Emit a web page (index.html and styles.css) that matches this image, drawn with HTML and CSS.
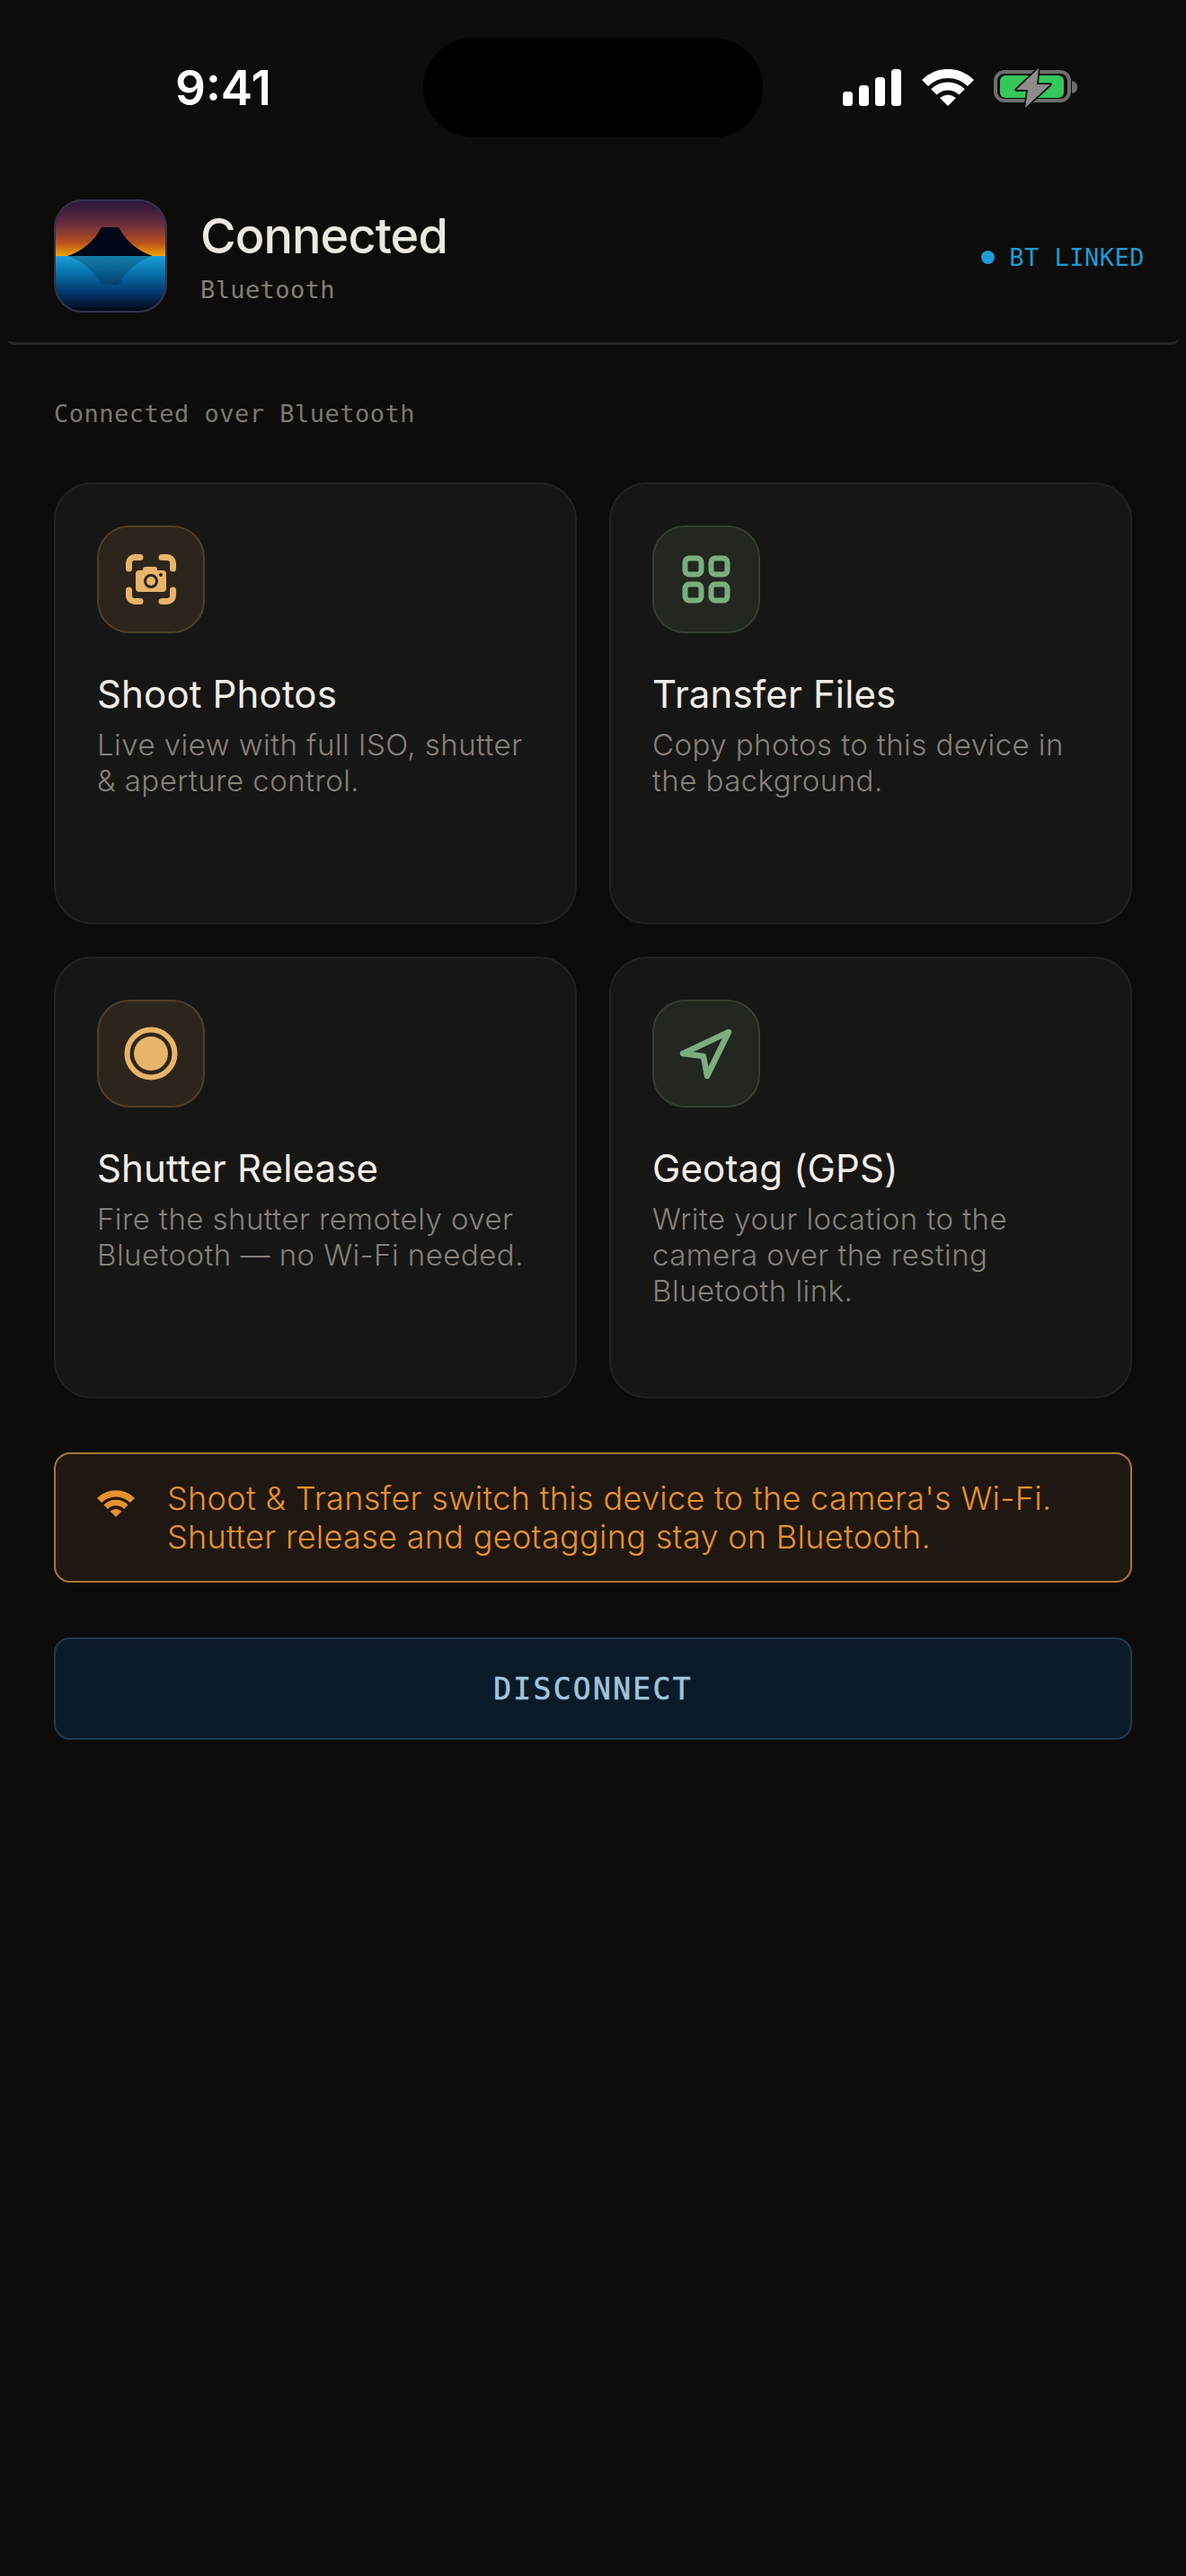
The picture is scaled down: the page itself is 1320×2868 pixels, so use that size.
FILE: index.html
```html
<!DOCTYPE html>
<html lang="en">
	<head>
		<meta charset="utf-8">
		<meta name="viewport" content="width=device-width, initial-scale=1.0">
		<title>Connected</title>
		<link rel="stylesheet" href="styles.css">
	</head>
	<body>
		<div class="status-bar">
			<div class="time">9:41</div>
			<div class="island"></div>
			<div class="status-icons">
				<svg class="signal" width="66" height="42" viewBox="0 0 66 42" fill="currentColor">
					<rect x="1" y="25" width="11" height="16" rx="3.5"/>
					<rect x="19" y="18" width="11" height="23" rx="3.5"/>
					<rect x="37" y="9" width="11" height="32" rx="3.5"/>
					<rect x="55" y="0" width="11" height="41" rx="3.5"/>
				</svg>
				<svg class="wifi" width="58" height="42" viewBox="0 0 58 42">
					<path d="M3.5 15.5A36 36 0 0 1 54.5 15.5" fill="none" stroke="currentColor" stroke-width="10"/>
					<path d="M13.4 25.4A22 22 0 0 1 44.6 25.4" fill="none" stroke="currentColor" stroke-width="9"/>
					<path d="M29 41L20 32Q29 25 38 32Z" fill="currentColor"/>
				</svg>
				<svg class="battery" width="96" height="50" viewBox="0 0 96 50">
					<rect x="3" y="7" width="82" height="32" rx="10" fill="none" stroke="#6e6e6c" stroke-width="4"/>
					<rect x="8" y="11" width="71" height="25" rx="6" fill="#34c759"/>
					<path d="M88 17c4 1 6 3 6 7s-2 6-6 7z" fill="#6e6e6c"/>
					<path d="M51 3L26 27H39L36 47L64 21H49Z" fill="#8c8c8a" stroke="#0d0c0a" stroke-width="3.5" stroke-linejoin="round" paint-order="stroke"/>
				</svg>
			</div>
		</div>

		<header class="top-bar">
			<svg class="app-icon" width="126" height="126" viewBox="0 0 126 126">
				<defs>
					<linearGradient id="sea" x1="0" y1="0" x2="0" y2="1">
						<stop offset="0" stop-color="#25163a"/>
						<stop offset="0.22" stop-color="#6c2e3c"/>
						<stop offset="0.38" stop-color="#b84f20"/>
						<stop offset="0.5" stop-color="#f2a600"/>
						<stop offset="0.5" stop-color="#1d9fd6"/>
						<stop offset="0.66" stop-color="#0670aa"/>
						<stop offset="0.85" stop-color="#053065"/>
						<stop offset="1" stop-color="#02040f"/>
					</linearGradient>
				</defs>
				<rect x="1" y="1" width="124" height="124" rx="31" fill="url(#sea)" stroke="#35324a" stroke-width="2"/>
				<path d="M15 63Q40 55 53 31H72Q85 55 110 63Z" fill="#010818"/>
				<path d="M15 63Q40 71 53 95H72Q85 71 110 63Z" fill="#010818" opacity="0.22"/>
			</svg>
			<div class="top-text">
				<div class="top-title">Connected</div>
				<div class="top-sub">Bluetooth</div>
			</div>
			<div class="link-state"><span class="link-dot"></span>BT LINKED</div>
		</header>

		<main class="content">
			<div class="section-label">Connected over Bluetooth</div>

			<div class="cards">
				<div class="card">
					<div class="card-icon amber">
						<svg width="60" height="60" viewBox="0 0 60 60">
							<path d="M5.5 18V12A6.5 6.5 0 0 1 12 5.5H18M42 5.5H48A6.5 6.5 0 0 1 54.5 12V18M54.5 42V48A6.5 6.5 0 0 1 48 54.5H42M18 54.5H12A6.5 6.5 0 0 1 5.5 48V42" fill="none" stroke="currentColor" stroke-width="7" stroke-linecap="round"/>
							<rect x="13" y="20" width="34" height="24" rx="4" fill="currentColor"/>
							<rect x="21" y="16" width="16" height="10" rx="3" fill="currentColor"/>
							<circle cx="30" cy="32" r="6.5" fill="none" stroke="#2d251c" stroke-width="3"/>
							<circle cx="41" cy="25" r="2" fill="#2d251c"/>
						</svg>
					</div>
					<h2 class="card-title">Shoot Photos</h2>
					<p class="card-desc">Live view with full ISO, shutter &amp; aperture control.</p>
				</div>
				<div class="card">
					<div class="card-icon green">
						<svg width="60" height="60" viewBox="0 0 60 60">
							<rect x="6.5" y="6.5" width="18" height="18" rx="4.5" fill="none" stroke="currentColor" stroke-width="6"/>
							<rect x="35.5" y="6.5" width="18" height="18" rx="4.5" fill="none" stroke="currentColor" stroke-width="6"/>
							<rect x="6.5" y="35.5" width="18" height="18" rx="4.5" fill="none" stroke="currentColor" stroke-width="6"/>
							<rect x="35.5" y="35.5" width="18" height="18" rx="4.5" fill="none" stroke="currentColor" stroke-width="6"/>
						</svg>
					</div>
					<h2 class="card-title">Transfer Files</h2>
					<p class="card-desc">Copy photos to this device in the background.</p>
				</div>
				<div class="card">
					<div class="card-icon amber">
						<svg width="60" height="60" viewBox="0 0 60 60">
							<circle cx="30" cy="30" r="26.5" fill="none" stroke="currentColor" stroke-width="6"/>
							<circle cx="30" cy="30" r="19" fill="currentColor"/>
						</svg>
					</div>
					<h2 class="card-title">Shutter Release</h2>
					<p class="card-desc">Fire the shutter remotely over Bluetooth — no Wi-Fi needed.</p>
				</div>
				<div class="card">
					<div class="card-icon green">
						<svg width="60" height="60" viewBox="0 0 60 60">
							<path d="M55 6L4 30L27 33L31 55Z" fill="none" stroke="currentColor" stroke-width="6.5" stroke-linejoin="round"/>
						</svg>
					</div>
					<h2 class="card-title">Geotag (GPS)</h2>
					<p class="card-desc">Write your location to the camera over the resting Bluetooth link.</p>
				</div>
			</div>

			<div class="notice">
				<svg class="notice-icon" width="42" height="31" viewBox="0 0 58 42">
					<path d="M3.5 15.5A36 36 0 0 1 54.5 15.5" fill="none" stroke="currentColor" stroke-width="10"/>
					<path d="M13.4 25.4A22 22 0 0 1 44.6 25.4" fill="none" stroke="currentColor" stroke-width="9"/>
					<path d="M29 41L20 32Q29 25 38 32Z" fill="currentColor"/>
				</svg>
				<p class="notice-text">Shoot &amp; Transfer switch this device to the camera's Wi-Fi. Shutter release and geotagging stay on Bluetooth.</p>
			</div>

			<button type="button" class="disconnect">DISCONNECT</button>
		</main>
	</body>
</html>
```

FILE: styles.css
```css
body {
	margin: 0;
	height: 2868px;
	overflow: hidden;
	background: #0d0c0a;
	color: #f0ebe3;
	font-family: Inter, "Liberation Sans", sans-serif;
}

/* status bar */
.status-bar {
	display: grid;
	grid-template-columns: 1fr 378px 1fr;
	align-items: center;
	padding-top: 42px;
}

.time {
	padding-left: 195px;
	color: #fff;
	font-size: 53px;
	font-weight: 600;
	line-height: 60px;
}

.island {
	height: 111px;
	border-radius: 56px;
	background: #000;
}

.status-icons {
	display: flex;
	align-items: center;
	padding-left: 88px;
	color: #fff;
}

.wifi {
	margin-left: 23px;
}

.battery {
	margin-left: 21px;
}

/* header */
.top-bar {
	display: flex;
	align-items: center;
	margin: 0 8px;
	padding: 69px 38px 33px 52px;
	border-bottom: 3px solid #25241e;
	border-radius: 0 0 8px 8px;
}

.app-icon {
	flex: none;
}

.top-text {
	flex: 1;
	margin-left: 37px;
}

.top-title {
	color: #ede8df;
	font-size: 54px;
	font-weight: 500;
	letter-spacing: -0.9px;
	line-height: 64px;
}

.top-sub {
	margin-top: 11px;
	color: #857f75;
	font-family: "DejaVu Sans Mono", monospace;
	font-size: 27px;
	letter-spacing: 0.4px;
	line-height: 34px;
}

.link-state {
	display: flex;
	align-items: center;
	margin-top: 2px;
	color: #1e9bd4;
	font-family: "DejaVu Sans Mono", monospace;
	font-size: 27px;
	letter-spacing: 0.5px;
}

.link-dot {
	width: 15px;
	height: 15px;
	margin-right: 16px;
	border-radius: 50%;
	background: #1e9bd4;
}

/* main */
.content {
	padding: 57px 60px 0;
}

.section-label {
	color: #7d786f;
	font-family: "DejaVu Sans Mono", monospace;
	font-size: 27px;
	letter-spacing: 0.5px;
	line-height: 40px;
}

.cards {
	display: grid;
	grid-template-columns: 1fr 1fr;
	grid-auto-rows: 492px;
	gap: 36px;
	margin-top: 56px;
}

.card {
	box-sizing: border-box;
	padding: 46px;
	border: 2px solid #23221f;
	border-radius: 42px;
	background: #161615;
}

.card-icon {
	display: flex;
	align-items: center;
	justify-content: center;
	box-sizing: border-box;
	width: 120px;
	height: 120px;
	border: 2px solid;
	border-radius: 36px;
}

.amber {
	border-color: #4f3f2a;
	background: #2d251c;
	color: #e8b469;
}

.green {
	border-color: #343f30;
	background: #22271f;
	color: #7bae7e;
}

.card-title {
	margin: 42px 0 0;
	color: #f2ede5;
	font-size: 42px;
	font-weight: 400;
	letter-spacing: 0.15px;
	line-height: 52px;
}

.card-desc {
	margin: 10px 0 0;
	color: #878279;
	font-size: 33px;
	font-weight: 300;
	letter-spacing: 0.45px;
	line-height: 40px;
}

.notice {
	display: flex;
	box-sizing: border-box;
	height: 145px;
	margin-top: 60px;
	padding: 40px 46px 0;
	border: 2px solid #a87836;
	border-radius: 18px;
	background: #1f1711;
	color: #e6922f;
}

.notice-icon {
	flex: none;
}

.notice-text {
	margin: -12px 0 0 36px;
	font-size: 36px;
	font-weight: 300;
	letter-spacing: 0.32px;
	line-height: 43px;
}

.disconnect {
	display: block;
	box-sizing: border-box;
	width: 100%;
	height: 114px;
	margin-top: 61px;
	padding: 0;
	border: 2px solid #1f3a52;
	border-radius: 18px;
	background: #0b1a29;
	color: #a0c4da;
	font-family: "DejaVu Sans Mono", monospace;
	font-size: 33px;
	letter-spacing: 2.3px;
	-webkit-text-stroke: 0.6px #a0c4da;
}
```
